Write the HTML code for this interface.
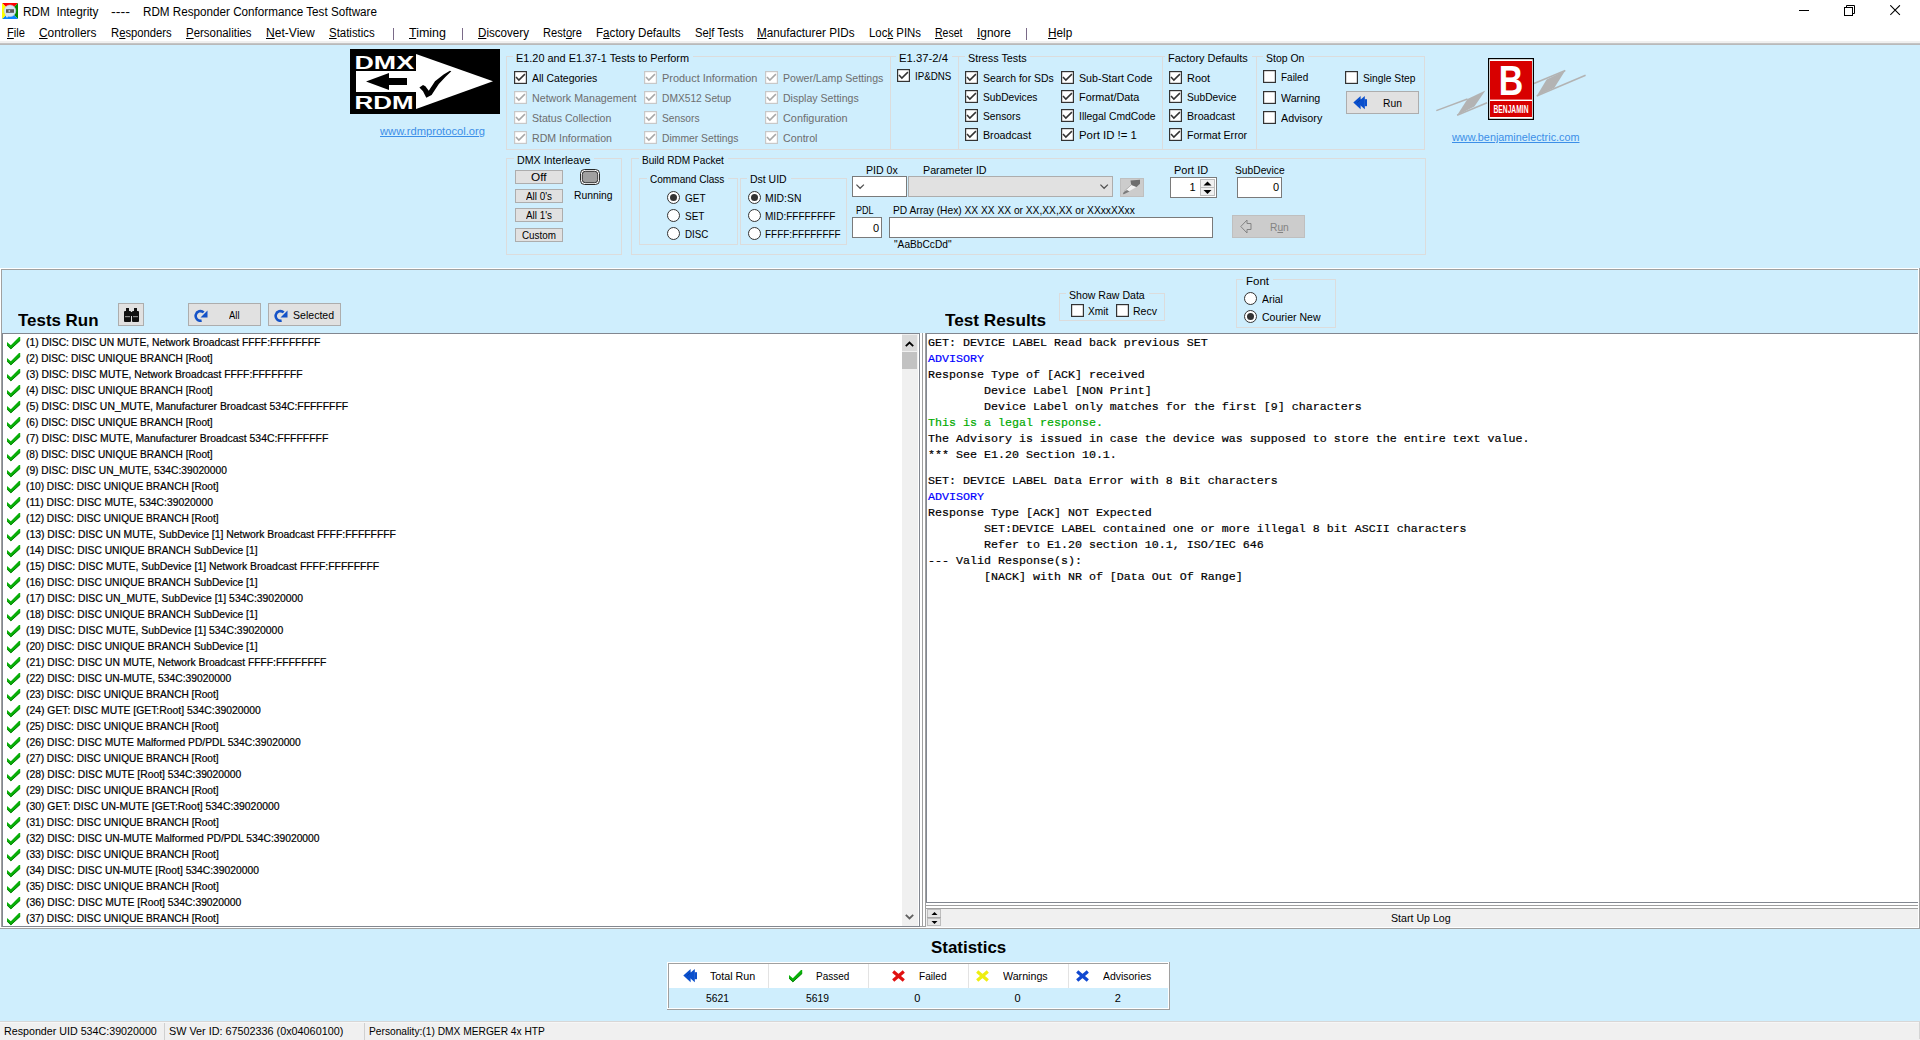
<!DOCTYPE html>
<html><head><meta charset="utf-8"><title>RDM Integrity</title>
<style>
html,body{margin:0;padding:0;}
body{width:1920px;height:1040px;overflow:hidden;position:relative;background:#CFEEFD;font-family:"Liberation Sans",sans-serif;}
.a{position:absolute;}
.t{position:absolute;white-space:pre;line-height:1;transform-origin:0 0;}
u{text-decoration:underline;text-underline-offset:1px;}

</style></head><body>
<div class="a" style="left:0px;top:0px;width:1920px;height:41px;background:#FFFFFF;"></div><div class="a" style="left:0px;top:41px;width:1920px;height:2px;background:#F0F0F0;"></div><div class="a" style="left:0px;top:43px;width:1920px;height:1px;background:#C4C4C4;"></div><div class="a" style="left:0px;top:44px;width:1920px;height:1px;background:#B9B9B9;"></div><svg class="a" style="left:2px;top:3px;" width="16" height="16" viewBox="0 0 16 16"><polygon points="0,0 16,0 8,8" fill="#FF0000"/><polygon points="16,0 16,16 8,8" fill="#008A00"/><polygon points="16,16 0,16 8,8" fill="#0A84FF"/><polygon points="0,16 0,0 8,8" fill="#FFFF00"/><polygon points="3,11 6.5,12 5,15" fill="#FFFFFF"/><circle cx="8" cy="7.8" r="5.8" fill="#D6E6F6" stroke="#C8CCD8" stroke-width="0.6"/><rect x="4" y="6.2" width="8" height="3.6" fill="#5A5A5A"/><rect x="6.5" y="7" width="1.6" height="2" fill="#B8B8B8"/></svg><span class="t" style="left:23px;top:6px;font-size:12px;color:#000;transform:scaleX(0.9845);">RDM  Integrity</span><span class="t" style="left:111px;top:6px;font-size:12px;color:#000;transform:scaleX(1.1887);">----</span><span class="t" style="left:143px;top:6px;font-size:12px;color:#000;transform:scaleX(0.9727);">RDM Responder Conformance Test Software</span><div class="a" style="left:1799px;top:10px;width:10px;height:1px;background:#000;"></div><svg class="a" style="left:1844px;top:5px;" width="12" height="12" viewBox="0 0 12 12"><rect x="0.5" y="2.5" width="8" height="8" fill="none" stroke="#000"/><path d="M2.5 2.5 V0.5 H10.5 V8.5 H8.5" fill="none" stroke="#000"/></svg><svg class="a" style="left:1890px;top:5px;" width="11" height="11" viewBox="0 0 11 11"><path d="M0.3 0.3 L9.9 9.9 M9.9 0.3 L0.3 9.9" stroke="#000" stroke-width="1.1"/></svg><span class="t" style="left:7px;top:27px;font-size:12px;color:#000;transform:scaleX(0.9298);"><u>F</u>ile</span><span class="t" style="left:39.25px;top:27px;font-size:12px;color:#000;transform:scaleX(0.9908);"><u>C</u>ontrollers</span><span class="t" style="left:111.25px;top:27px;font-size:12px;color:#000;transform:scaleX(0.9385);">R<u>e</u>sponders</span><span class="t" style="left:186.25px;top:27px;font-size:12px;color:#000;transform:scaleX(0.9532);"><u>P</u>ersonalities</span><span class="t" style="left:266.25px;top:27px;font-size:12px;color:#000;transform:scaleX(1.0058);"><u>N</u>et-View</span><span class="t" style="left:329.25px;top:27px;font-size:12px;color:#000;transform:scaleX(0.9525);"><u>S</u>tatistics</span><div class="a" style="left:393px;top:28px;width:1px;height:12px;background:#7A6A88;"></div><span class="t" style="left:409.25px;top:27px;font-size:12px;color:#000;transform:scaleX(1.0400);"><u>T</u>iming</span><div class="a" style="left:462px;top:28px;width:1px;height:12px;background:#7A6A88;"></div><span class="t" style="left:478px;top:27px;font-size:12px;color:#000;transform:scaleX(0.9680);"><u>D</u>iscovery</span><span class="t" style="left:543px;top:27px;font-size:12px;color:#000;transform:scaleX(0.9275);">Rest<u>o</u>re</span><span class="t" style="left:596.2px;top:27px;font-size:12px;color:#000;transform:scaleX(0.9681);">F<u>a</u>ctory Defaults</span><span class="t" style="left:694.7px;top:27px;font-size:12px;color:#000;transform:scaleX(0.9358);">Se<u>l</u>f Tests</span><span class="t" style="left:757px;top:27px;font-size:12px;color:#000;transform:scaleX(0.9745);"><u>M</u>anufacturer PIDs</span><span class="t" style="left:869px;top:27px;font-size:12px;color:#000;transform:scaleX(0.9506);">Loc<u>k</u> PINs</span><span class="t" style="left:935.3px;top:27px;font-size:12px;color:#000;transform:scaleX(0.8737);"><u>R</u>eset</span><span class="t" style="left:977.3px;top:27px;font-size:12px;color:#000;transform:scaleX(0.9957);"><u>I</u>gnore</span><div class="a" style="left:1026px;top:28px;width:1px;height:12px;background:#7A6A88;"></div><span class="t" style="left:1048.3px;top:27px;font-size:12px;color:#000;transform:scaleX(0.9803);"><u>H</u>elp</span><svg class="a" style="left:350px;top:49px;" width="150" height="65" viewBox="0 0 150 65"><rect x="0" y="0" width="150" height="65" fill="#000"/><text x="4.5" y="19.5" font-family="Liberation Sans" font-weight="700" font-size="19" fill="#fff" textLength="59.5" lengthAdjust="spacingAndGlyphs">DMX</text><rect x="6" y="22" width="60" height="21" fill="#fff"/><polygon points="16,32.5 39,24 39,29 57,29 57,36 39,36 39,41" fill="#000"/><text x="4.5" y="59.8" font-family="Liberation Sans" font-weight="700" font-size="19" fill="#fff" textLength="59" lengthAdjust="spacingAndGlyphs">RDM</text><polygon points="66,5 143,32.3 66,60" fill="#fff"/><polygon points="69.4,38.4 73,36 75.4,37.2 78.75,41.8 85,32.2 93.6,25.4 99.9,21.8 101.3,22.3 95.6,27.8 88.8,35 81.6,46.1 76.3,48.7 73,42.25" fill="#000"/></svg><span class="t" style="left:380px;top:126px;font-size:11px;color:#3C8FE8;transform:scaleX(1.0162);text-decoration:underline;">www.rdmprotocol.org</span><div class="a" style="left:506px;top:56px;width:7px;height:1px;background:#DCDCDC;"></div><div class="a" style="left:693px;top:56px;width:197px;height:1px;background:#DCDCDC;"></div><div class="a" style="left:506px;top:56px;width:1px;height:93px;background:#DCDCDC;"></div><div class="a" style="left:890px;top:56px;width:1px;height:94px;background:#DCDCDC;"></div><div class="a" style="left:506px;top:149px;width:385px;height:1px;background:#DCDCDC;"></div><span class="t" style="left:516px;top:53px;font-size:11px;color:#000;transform:scaleX(0.9903);">E1.20 and E1.37-1 Tests to Perform</span><svg class="a" style="left:514px;top:71px;" width="13" height="13" viewBox="0 0 13 13"><rect x="0.6" y="0.6" width="11.8" height="11.8" fill="#fff" stroke="#333333" stroke-width="1.2"/><path d="M2 6 L4.85 9.1 L10.9 3.1" fill="none" stroke="#333333" stroke-width="1.5"/></svg><span class="t" style="left:532px;top:73px;font-size:11px;color:#000;transform:scaleX(0.9520);">All Categories</span><svg class="a" style="left:514px;top:91px;" width="13" height="13" viewBox="0 0 13 13"><rect x="0.6" y="0.6" width="11.8" height="11.8" fill="#fff" stroke="#C8C8C8" stroke-width="1.2"/><path d="M2 6 L4.85 9.1 L10.9 3.1" fill="none" stroke="#A8A8A8" stroke-width="1.5"/></svg><span class="t" style="left:532px;top:93px;font-size:11px;color:#6D6D6D;transform:scaleX(0.9711);">Network Management</span><svg class="a" style="left:514px;top:111px;" width="13" height="13" viewBox="0 0 13 13"><rect x="0.6" y="0.6" width="11.8" height="11.8" fill="#fff" stroke="#C8C8C8" stroke-width="1.2"/><path d="M2 6 L4.85 9.1 L10.9 3.1" fill="none" stroke="#A8A8A8" stroke-width="1.5"/></svg><span class="t" style="left:532px;top:113px;font-size:11px;color:#6D6D6D;transform:scaleX(0.9607);">Status Collection</span><svg class="a" style="left:514px;top:131px;" width="13" height="13" viewBox="0 0 13 13"><rect x="0.6" y="0.6" width="11.8" height="11.8" fill="#fff" stroke="#C8C8C8" stroke-width="1.2"/><path d="M2 6 L4.85 9.1 L10.9 3.1" fill="none" stroke="#A8A8A8" stroke-width="1.5"/></svg><span class="t" style="left:532px;top:133px;font-size:11px;color:#6D6D6D;transform:scaleX(0.9622);">RDM Information</span><svg class="a" style="left:644px;top:71px;" width="13" height="13" viewBox="0 0 13 13"><rect x="0.6" y="0.6" width="11.8" height="11.8" fill="#fff" stroke="#C8C8C8" stroke-width="1.2"/><path d="M2 6 L4.85 9.1 L10.9 3.1" fill="none" stroke="#A8A8A8" stroke-width="1.5"/></svg><span class="t" style="left:661.7px;top:73px;font-size:11px;color:#6D6D6D;transform:scaleX(0.9938);">Product Information</span><svg class="a" style="left:644px;top:91px;" width="13" height="13" viewBox="0 0 13 13"><rect x="0.6" y="0.6" width="11.8" height="11.8" fill="#fff" stroke="#C8C8C8" stroke-width="1.2"/><path d="M2 6 L4.85 9.1 L10.9 3.1" fill="none" stroke="#A8A8A8" stroke-width="1.5"/></svg><span class="t" style="left:661.7px;top:93px;font-size:11px;color:#6D6D6D;transform:scaleX(0.9288);">DMX512 Setup</span><svg class="a" style="left:644px;top:111px;" width="13" height="13" viewBox="0 0 13 13"><rect x="0.6" y="0.6" width="11.8" height="11.8" fill="#fff" stroke="#C8C8C8" stroke-width="1.2"/><path d="M2 6 L4.85 9.1 L10.9 3.1" fill="none" stroke="#A8A8A8" stroke-width="1.5"/></svg><span class="t" style="left:661.7px;top:113px;font-size:11px;color:#6D6D6D;transform:scaleX(0.9292);">Sensors</span><svg class="a" style="left:644px;top:131px;" width="13" height="13" viewBox="0 0 13 13"><rect x="0.6" y="0.6" width="11.8" height="11.8" fill="#fff" stroke="#C8C8C8" stroke-width="1.2"/><path d="M2 6 L4.85 9.1 L10.9 3.1" fill="none" stroke="#A8A8A8" stroke-width="1.5"/></svg><span class="t" style="left:661.7px;top:133px;font-size:11px;color:#6D6D6D;transform:scaleX(0.9410);">Dimmer Settings</span><svg class="a" style="left:765px;top:71px;" width="13" height="13" viewBox="0 0 13 13"><rect x="0.6" y="0.6" width="11.8" height="11.8" fill="#fff" stroke="#C8C8C8" stroke-width="1.2"/><path d="M2 6 L4.85 9.1 L10.9 3.1" fill="none" stroke="#A8A8A8" stroke-width="1.5"/></svg><span class="t" style="left:782.6px;top:73px;font-size:11px;color:#6D6D6D;transform:scaleX(0.9602);">Power/Lamp Settings</span><svg class="a" style="left:765px;top:91px;" width="13" height="13" viewBox="0 0 13 13"><rect x="0.6" y="0.6" width="11.8" height="11.8" fill="#fff" stroke="#C8C8C8" stroke-width="1.2"/><path d="M2 6 L4.85 9.1 L10.9 3.1" fill="none" stroke="#A8A8A8" stroke-width="1.5"/></svg><span class="t" style="left:782.6px;top:93px;font-size:11px;color:#6D6D6D;transform:scaleX(0.9597);">Display Settings</span><svg class="a" style="left:765px;top:111px;" width="13" height="13" viewBox="0 0 13 13"><rect x="0.6" y="0.6" width="11.8" height="11.8" fill="#fff" stroke="#C8C8C8" stroke-width="1.2"/><path d="M2 6 L4.85 9.1 L10.9 3.1" fill="none" stroke="#A8A8A8" stroke-width="1.5"/></svg><span class="t" style="left:782.6px;top:113px;font-size:11px;color:#6D6D6D;transform:scaleX(0.9872);">Configuration</span><svg class="a" style="left:765px;top:131px;" width="13" height="13" viewBox="0 0 13 13"><rect x="0.6" y="0.6" width="11.8" height="11.8" fill="#fff" stroke="#C8C8C8" stroke-width="1.2"/><path d="M2 6 L4.85 9.1 L10.9 3.1" fill="none" stroke="#A8A8A8" stroke-width="1.5"/></svg><span class="t" style="left:782.6px;top:133px;font-size:11px;color:#6D6D6D;transform:scaleX(0.9727);">Control</span><div class="a" style="left:890px;top:56px;width:6px;height:1px;background:#DCDCDC;"></div><div class="a" style="left:952px;top:56px;width:6px;height:1px;background:#DCDCDC;"></div><div class="a" style="left:890px;top:149px;width:68px;height:1px;background:#DCDCDC;"></div><span class="t" style="left:899px;top:53px;font-size:11px;color:#000;transform:scaleX(1.0272);">E1.37-2/4</span><svg class="a" style="left:897px;top:69px;" width="13" height="13" viewBox="0 0 13 13"><rect x="0.6" y="0.6" width="11.8" height="11.8" fill="#fff" stroke="#333333" stroke-width="1.2"/><path d="M2 6 L4.85 9.1 L10.9 3.1" fill="none" stroke="#333333" stroke-width="1.5"/></svg><span class="t" style="left:914.7px;top:71px;font-size:11px;color:#000;transform:scaleX(0.8860);">IP&amp;DNS</span><div class="a" style="left:958px;top:56px;width:6.600000000000023px;height:1px;background:#DCDCDC;"></div><div class="a" style="left:1030.2px;top:56px;width:131.79999999999995px;height:1px;background:#DCDCDC;"></div><div class="a" style="left:958px;top:56px;width:1px;height:93px;background:#DCDCDC;"></div><div class="a" style="left:958px;top:149px;width:205px;height:1px;background:#DCDCDC;"></div><span class="t" style="left:967.6px;top:53px;font-size:11px;color:#000;transform:scaleX(0.9813);">Stress Tests</span><svg class="a" style="left:965px;top:71px;" width="13" height="13" viewBox="0 0 13 13"><rect x="0.6" y="0.6" width="11.8" height="11.8" fill="#fff" stroke="#333333" stroke-width="1.2"/><path d="M2 6 L4.85 9.1 L10.9 3.1" fill="none" stroke="#333333" stroke-width="1.5"/></svg><span class="t" style="left:982.7px;top:73px;font-size:11px;color:#000;transform:scaleX(0.9478);">Search for SDs</span><svg class="a" style="left:1061px;top:71px;" width="13" height="13" viewBox="0 0 13 13"><rect x="0.6" y="0.6" width="11.8" height="11.8" fill="#fff" stroke="#333333" stroke-width="1.2"/><path d="M2 6 L4.85 9.1 L10.9 3.1" fill="none" stroke="#333333" stroke-width="1.5"/></svg><span class="t" style="left:1078.6px;top:73px;font-size:11px;color:#000;transform:scaleX(0.9667);">Sub-Start Code</span><svg class="a" style="left:965px;top:90px;" width="13" height="13" viewBox="0 0 13 13"><rect x="0.6" y="0.6" width="11.8" height="11.8" fill="#fff" stroke="#333333" stroke-width="1.2"/><path d="M2 6 L4.85 9.1 L10.9 3.1" fill="none" stroke="#333333" stroke-width="1.5"/></svg><span class="t" style="left:982.7px;top:92px;font-size:11px;color:#000;transform:scaleX(0.9267);">SubDevices</span><svg class="a" style="left:1061px;top:90px;" width="13" height="13" viewBox="0 0 13 13"><rect x="0.6" y="0.6" width="11.8" height="11.8" fill="#fff" stroke="#333333" stroke-width="1.2"/><path d="M2 6 L4.85 9.1 L10.9 3.1" fill="none" stroke="#333333" stroke-width="1.5"/></svg><span class="t" style="left:1078.6px;top:92px;font-size:11px;color:#000;transform:scaleX(0.9879);">Format/Data</span><svg class="a" style="left:965px;top:109px;" width="13" height="13" viewBox="0 0 13 13"><rect x="0.6" y="0.6" width="11.8" height="11.8" fill="#fff" stroke="#333333" stroke-width="1.2"/><path d="M2 6 L4.85 9.1 L10.9 3.1" fill="none" stroke="#333333" stroke-width="1.5"/></svg><span class="t" style="left:982.7px;top:111px;font-size:11px;color:#000;transform:scaleX(0.9292);">Sensors</span><svg class="a" style="left:1061px;top:109px;" width="13" height="13" viewBox="0 0 13 13"><rect x="0.6" y="0.6" width="11.8" height="11.8" fill="#fff" stroke="#333333" stroke-width="1.2"/><path d="M2 6 L4.85 9.1 L10.9 3.1" fill="none" stroke="#333333" stroke-width="1.5"/></svg><span class="t" style="left:1078.6px;top:111px;font-size:11px;color:#000;transform:scaleX(0.9419);">Illegal CmdCode</span><svg class="a" style="left:965px;top:128px;" width="13" height="13" viewBox="0 0 13 13"><rect x="0.6" y="0.6" width="11.8" height="11.8" fill="#fff" stroke="#333333" stroke-width="1.2"/><path d="M2 6 L4.85 9.1 L10.9 3.1" fill="none" stroke="#333333" stroke-width="1.5"/></svg><span class="t" style="left:982.7px;top:130px;font-size:11px;color:#000;transform:scaleX(0.9711);">Broadcast</span><svg class="a" style="left:1061px;top:128px;" width="13" height="13" viewBox="0 0 13 13"><rect x="0.6" y="0.6" width="11.8" height="11.8" fill="#fff" stroke="#333333" stroke-width="1.2"/><path d="M2 6 L4.85 9.1 L10.9 3.1" fill="none" stroke="#333333" stroke-width="1.5"/></svg><span class="t" style="left:1078.6px;top:130px;font-size:11px;color:#000;transform:scaleX(1.0348);">Port ID != 1</span><div class="a" style="left:1162px;top:56px;width:3.400000000000091px;height:1px;background:#DCDCDC;"></div><div class="a" style="left:1252.2px;top:56px;width:3.7999999999999545px;height:1px;background:#DCDCDC;"></div><div class="a" style="left:1162px;top:56px;width:1px;height:93px;background:#DCDCDC;"></div><div class="a" style="left:1162px;top:149px;width:95px;height:1px;background:#DCDCDC;"></div><span class="t" style="left:1168.4px;top:53px;font-size:11px;color:#000;transform:scaleX(0.9963);">Factory Defaults</span><svg class="a" style="left:1169px;top:71px;" width="13" height="13" viewBox="0 0 13 13"><rect x="0.6" y="0.6" width="11.8" height="11.8" fill="#fff" stroke="#333333" stroke-width="1.2"/><path d="M2 6 L4.85 9.1 L10.9 3.1" fill="none" stroke="#333333" stroke-width="1.5"/></svg><span class="t" style="left:1186.6px;top:73px;font-size:11px;color:#000;transform:scaleX(0.9935);">Root</span><svg class="a" style="left:1169px;top:90px;" width="13" height="13" viewBox="0 0 13 13"><rect x="0.6" y="0.6" width="11.8" height="11.8" fill="#fff" stroke="#333333" stroke-width="1.2"/><path d="M2 6 L4.85 9.1 L10.9 3.1" fill="none" stroke="#333333" stroke-width="1.5"/></svg><span class="t" style="left:1186.6px;top:92px;font-size:11px;color:#000;transform:scaleX(0.9304);">SubDevice</span><svg class="a" style="left:1169px;top:109px;" width="13" height="13" viewBox="0 0 13 13"><rect x="0.6" y="0.6" width="11.8" height="11.8" fill="#fff" stroke="#333333" stroke-width="1.2"/><path d="M2 6 L4.85 9.1 L10.9 3.1" fill="none" stroke="#333333" stroke-width="1.5"/></svg><span class="t" style="left:1186.6px;top:111px;font-size:11px;color:#000;transform:scaleX(0.9691);">Broadcast</span><svg class="a" style="left:1169px;top:128px;" width="13" height="13" viewBox="0 0 13 13"><rect x="0.6" y="0.6" width="11.8" height="11.8" fill="#fff" stroke="#333333" stroke-width="1.2"/><path d="M2 6 L4.85 9.1 L10.9 3.1" fill="none" stroke="#333333" stroke-width="1.5"/></svg><span class="t" style="left:1186.6px;top:130px;font-size:11px;color:#000;transform:scaleX(0.9640);">Format Error</span><div class="a" style="left:1256px;top:56px;width:6.599999999999909px;height:1px;background:#DCDCDC;"></div><div class="a" style="left:1308.0px;top:56px;width:116.0px;height:1px;background:#DCDCDC;"></div><div class="a" style="left:1256px;top:56px;width:1px;height:93px;background:#DCDCDC;"></div><div class="a" style="left:1424px;top:56px;width:1px;height:94px;background:#DCDCDC;"></div><div class="a" style="left:1256px;top:149px;width:169px;height:1px;background:#DCDCDC;"></div><span class="t" style="left:1265.6px;top:53px;font-size:11px;color:#000;transform:scaleX(0.9515);">Stop On</span><svg class="a" style="left:1263px;top:70px;" width="13" height="13" viewBox="0 0 13 13"><rect x="0.6" y="0.6" width="11.8" height="11.8" fill="#fff" stroke="#333333" stroke-width="1.2"/></svg><span class="t" style="left:1280.7px;top:72px;font-size:11px;color:#000;transform:scaleX(0.9076);">Failed</span><svg class="a" style="left:1263px;top:91px;" width="13" height="13" viewBox="0 0 13 13"><rect x="0.6" y="0.6" width="11.8" height="11.8" fill="#fff" stroke="#333333" stroke-width="1.2"/></svg><span class="t" style="left:1280.7px;top:93px;font-size:11px;color:#000;transform:scaleX(0.9689);">Warning</span><svg class="a" style="left:1263px;top:111px;" width="13" height="13" viewBox="0 0 13 13"><rect x="0.6" y="0.6" width="11.8" height="11.8" fill="#fff" stroke="#333333" stroke-width="1.2"/></svg><span class="t" style="left:1280.7px;top:113px;font-size:11px;color:#000;transform:scaleX(0.9790);">Advisory</span><svg class="a" style="left:1345px;top:71px;" width="13" height="13" viewBox="0 0 13 13"><rect x="0.6" y="0.6" width="11.8" height="11.8" fill="#fff" stroke="#333333" stroke-width="1.2"/></svg><span class="t" style="left:1362.7px;top:73px;font-size:11px;color:#000;transform:scaleX(0.9313);">Single Step</span><div class="a" style="left:1346px;top:91px;width:73px;height:23px;background:#E1E1E1;border:1px solid #ADADAD;box-sizing:border-box;"></div><svg class="a" style="left:1353px;top:96px;" width="15" height="14" viewBox="0 0 15 14"><polygon points="0.3,6.6 7.6,0 7.6,13.2" fill="#0A4FCC"/><polygon points="4.2,6.6 11.8,0 11.8,13.2" fill="#0A4FCC"/><rect x="11.5" y="3.2" width="2.5" height="7" fill="#0A4FCC"/><path d="M4.2 6.6 L7.6 3.6" stroke="#0638A0" stroke-width="0.8"/></svg><span class="t" style="left:1383.4px;top:98px;font-size:11px;color:#000;transform:scaleX(0.9362);">Run</span><svg class="a" style="left:1430px;top:56px;" width="160" height="66" viewBox="0 0 160 66"><path d="M6.3 54.6 L37.5 43" stroke="#B3B3B3" stroke-width="1.5"/><polygon points="37.5,43 55.4,34.4 44.4,50.5 27.1,59.2" fill="#B3B3B3"/><path d="M27.1 59.2 L57.1 46.8" stroke="#B3B3B3" stroke-width="1.5"/><path d="M104 27.5 L135.3 14.5" stroke="#B3B3B3" stroke-width="1.5"/><polygon points="116.6,23.4 135.3,14.5 124.4,31.7 106.7,40" fill="#B3B3B3"/><path d="M106.7 40 L155.6 19.2" stroke="#B3B3B3" stroke-width="1.5"/><rect x="58.6" y="2.6" width="44.8" height="60.8" fill="#fff" stroke="#000" stroke-width="1.2"/><rect x="60" y="5" width="42" height="38.6" fill="#D80000"/><rect x="60" y="45" width="42" height="16" fill="#D80000"/><text x="81" y="39" font-family="Liberation Sans" font-weight="700" font-size="42" fill="#fff" text-anchor="middle" textLength="24.5" lengthAdjust="spacingAndGlyphs">B</text><text x="81" y="56.7" font-family="Liberation Sans" font-weight="700" font-size="10" fill="#fff" text-anchor="middle" textLength="35" lengthAdjust="spacingAndGlyphs">BENJAMIN</text></svg><span class="t" style="left:1452px;top:132px;font-size:11px;color:#3C8FE8;transform:scaleX(0.9837);text-decoration:underline;">www.benjaminelectric.com</span><div class="a" style="left:506px;top:158px;width:7.5px;height:1px;background:#DCDCDC;"></div><div class="a" style="left:594.0px;top:158px;width:27.0px;height:1px;background:#DCDCDC;"></div><div class="a" style="left:506px;top:158px;width:1px;height:96px;background:#DCDCDC;"></div><div class="a" style="left:621px;top:158px;width:1px;height:97px;background:#DCDCDC;"></div><div class="a" style="left:506px;top:254px;width:116px;height:1px;background:#DCDCDC;"></div><span class="t" style="left:516.5px;top:155px;font-size:11px;color:#000;transform:scaleX(0.9695);">DMX Interleave</span><div class="a" style="left:515px;top:170px;width:48px;height:14px;background:#E1E1E1;border:1px solid #ADADAD;box-sizing:border-box;"></div><span class="t" style="left:531.25px;top:172px;font-size:11px;color:#000;transform:scaleX(1.0701);">Off</span><div class="a" style="left:515px;top:189px;width:48px;height:14px;background:#E1E1E1;border:1px solid #ADADAD;box-sizing:border-box;"></div><span class="t" style="left:526.00px;top:191px;font-size:11px;color:#000;transform:scaleX(0.8966);">All 0&#x27;s</span><div class="a" style="left:515px;top:208px;width:48px;height:14px;background:#E1E1E1;border:1px solid #ADADAD;box-sizing:border-box;"></div><span class="t" style="left:526.00px;top:210px;font-size:11px;color:#000;transform:scaleX(0.8966);">All 1&#x27;s</span><div class="a" style="left:515px;top:228px;width:48px;height:14px;background:#E1E1E1;border:1px solid #ADADAD;box-sizing:border-box;"></div><span class="t" style="left:522.00px;top:230px;font-size:11px;color:#000;transform:scaleX(0.8969);">Custom</span><svg class="a" style="left:580px;top:169px;" width="20" height="16" viewBox="0 0 20 16"><rect x="0.5" y="0.5" width="19" height="15" rx="4" fill="#fff" stroke="#111" stroke-width="0.9"/><rect x="2.3" y="2.3" width="15.4" height="11.4" rx="3" fill="#A0A0A0" stroke="#222" stroke-width="0.9"/></svg><span class="t" style="left:573.5px;top:190px;font-size:11px;color:#000;transform:scaleX(0.9418);">Running</span><div class="a" style="left:631px;top:158px;width:7.600000000000023px;height:1px;background:#DCDCDC;"></div><div class="a" style="left:727.5px;top:158px;width:697.5px;height:1px;background:#DCDCDC;"></div><div class="a" style="left:631px;top:158px;width:1px;height:96px;background:#DCDCDC;"></div><div class="a" style="left:1425px;top:158px;width:1px;height:97px;background:#DCDCDC;"></div><div class="a" style="left:631px;top:254px;width:795px;height:1px;background:#DCDCDC;"></div><span class="t" style="left:641.6px;top:155px;font-size:11px;color:#000;transform:scaleX(0.9175);">Build RDM Packet</span><div class="a" style="left:639px;top:178px;width:7.600000000000023px;height:1px;background:#DCDCDC;"></div><div class="a" style="left:728.0px;top:178px;width:9.0px;height:1px;background:#DCDCDC;"></div><div class="a" style="left:639px;top:178px;width:1px;height:66px;background:#DCDCDC;"></div><div class="a" style="left:737px;top:178px;width:1px;height:67px;background:#DCDCDC;"></div><div class="a" style="left:639px;top:244px;width:99px;height:1px;background:#DCDCDC;"></div><span class="t" style="left:649.6px;top:174px;font-size:11px;color:#000;transform:scaleX(0.9150);">Command Class</span><div class="a" style="left:740px;top:178px;width:7.2999999999999545px;height:1px;background:#DCDCDC;"></div><div class="a" style="left:790.9px;top:178px;width:55.10000000000002px;height:1px;background:#DCDCDC;"></div><div class="a" style="left:740px;top:178px;width:1px;height:66px;background:#DCDCDC;"></div><div class="a" style="left:846px;top:178px;width:1px;height:67px;background:#DCDCDC;"></div><div class="a" style="left:740px;top:244px;width:107px;height:1px;background:#DCDCDC;"></div><span class="t" style="left:750.3px;top:174px;font-size:11px;color:#000;transform:scaleX(0.9506);">Dst UID</span><svg class="a" style="left:667.0px;top:191.0px;" width="13" height="13" viewBox="0 0 13 13"><circle cx="6.5" cy="6.5" r="6" fill="#fff" stroke="#333" stroke-width="1"/><circle cx="6.5" cy="6.5" r="3.5" fill="#333"/></svg><span class="t" style="left:684.7px;top:193px;font-size:11px;color:#000;transform:scaleX(0.9061);">GET</span><svg class="a" style="left:667.0px;top:209.0px;" width="13" height="13" viewBox="0 0 13 13"><circle cx="6.5" cy="6.5" r="6" fill="#fff" stroke="#333" stroke-width="1"/></svg><span class="t" style="left:684.7px;top:211px;font-size:11px;color:#000;transform:scaleX(0.9109);">SET</span><svg class="a" style="left:667.0px;top:227.0px;" width="13" height="13" viewBox="0 0 13 13"><circle cx="6.5" cy="6.5" r="6" fill="#fff" stroke="#333" stroke-width="1"/></svg><span class="t" style="left:684.7px;top:229px;font-size:11px;color:#000;transform:scaleX(0.8904);">DISC</span><svg class="a" style="left:748.0px;top:191.0px;" width="13" height="13" viewBox="0 0 13 13"><circle cx="6.5" cy="6.5" r="6" fill="#fff" stroke="#333" stroke-width="1"/><circle cx="6.5" cy="6.5" r="3.5" fill="#333"/></svg><span class="t" style="left:765.3px;top:193px;font-size:11px;color:#000;transform:scaleX(0.9455);">MID:SN</span><svg class="a" style="left:748.0px;top:209.0px;" width="13" height="13" viewBox="0 0 13 13"><circle cx="6.5" cy="6.5" r="6" fill="#fff" stroke="#333" stroke-width="1"/></svg><span class="t" style="left:765.3px;top:211px;font-size:11px;color:#000;transform:scaleX(0.9132);">MID:FFFFFFFF</span><svg class="a" style="left:748.0px;top:227.0px;" width="13" height="13" viewBox="0 0 13 13"><circle cx="6.5" cy="6.5" r="6" fill="#fff" stroke="#333" stroke-width="1"/></svg><span class="t" style="left:765.3px;top:229px;font-size:11px;color:#000;transform:scaleX(0.9034);">FFFF:FFFFFFFF</span><span class="t" style="left:865.7px;top:165px;font-size:11px;color:#000;transform:scaleX(0.9632);">PID 0x</span><span class="t" style="left:922.6px;top:165px;font-size:11px;color:#000;transform:scaleX(0.9722);">Parameter ID</span><div class="a" style="left:852px;top:176px;width:55px;height:21px;background:#fff;border:1px solid #7A7A7A;box-sizing:border-box;"></div><svg class="a" style="left:856px;top:184px;" width="9" height="6" viewBox="0 0 9 6"><path d="M0.4 0.6 L4.1 4.3 L7.9 0.6" fill="none" stroke="#505050" stroke-width="1.25"/></svg><div class="a" style="left:908px;top:176px;width:205px;height:21px;background:#E1E1E1;border:1px solid #ADADAD;box-sizing:border-box;"></div><svg class="a" style="left:1099.5px;top:184px;" width="9" height="6" viewBox="0 0 9 6"><path d="M0.4 0.6 L4.1 4.3 L7.9 0.6" fill="none" stroke="#505050" stroke-width="1.25"/></svg><div class="a" style="left:1120px;top:178px;width:24px;height:19px;background:#CCCCCC;border:1px solid #BFBFBF;box-sizing:border-box;"></div><svg class="a" style="left:1120px;top:178px;" width="24" height="19" viewBox="0 0 24 19"><polygon points="11.5,6 16.5,9 5,15.5 3,16 4,13.5" fill="#F2F2F2"/><polygon points="7,12 9.5,13.6 4.5,16 2.8,16.3 3.6,14" fill="#7C7C7C"/><polygon points="10.5,2.5 20,1.8 20,5.8 16.5,9 11.2,7" fill="#6E6E6E"/><path d="M11.5 6.5 L4 13.5" stroke="#9A9A9A" stroke-width="0.8"/></svg><span class="t" style="left:1173.5px;top:165px;font-size:11px;color:#000;transform:scaleX(0.9961);">Port ID</span><span class="t" style="left:1234.5px;top:165px;font-size:11px;color:#000;transform:scaleX(0.9323);">SubDevice</span><div class="a" style="left:1170px;top:177px;width:47px;height:21px;background:#fff;border:1px solid #7A7A7A;box-sizing:border-box;"></div><div class="a" style="left:1200px;top:179px;width:15px;height:17px;background:#F0F0F0;border:1px solid #BDBDBD;box-sizing:border-box;"></div><div class="a" style="left:1201px;top:187px;width:13px;height:1px;background:#BDBDBD;"></div><svg class="a" style="left:1203px;top:181px;" width="9" height="14" viewBox="0 0 9 14"><polygon points="4.5,0.5 8.5,4.5 0.5,4.5" fill="#000"/><polygon points="0.5,9 8.5,9 4.5,13" fill="#000"/></svg><span class="t" style="left:1189.38px;top:182px;font-size:11px;color:#000;">1</span><div class="a" style="left:1237px;top:177px;width:45px;height:21px;background:#fff;border:1px solid #7A7A7A;box-sizing:border-box;"></div><span class="t" style="left:1272.88px;top:182px;font-size:11px;color:#000;">0</span><span class="t" style="left:855.6px;top:205px;font-size:11px;color:#000;transform:scaleX(0.8222);">PDL</span><span class="t" style="left:892.5px;top:205px;font-size:11px;color:#000;transform:scaleX(0.9285);">PD Array (Hex) XX XX XX or XX,XX,XX or XXxxXXxx</span><div class="a" style="left:852px;top:217px;width:30px;height:21px;background:#fff;border:1px solid #7A7A7A;box-sizing:border-box;"></div><span class="t" style="left:872.88px;top:223px;font-size:11px;color:#000;">0</span><div class="a" style="left:889px;top:217px;width:324px;height:21px;background:#fff;border:1px solid #7A7A7A;box-sizing:border-box;"></div><span class="t" style="left:893.5px;top:239px;font-size:11px;color:#000;transform:scaleX(0.9239);">&quot;AaBbCcDd&quot;</span><div class="a" style="left:1232px;top:215px;width:73px;height:23px;background:#CCCCCC;border:1px solid #BFBFBF;box-sizing:border-box;"></div><svg class="a" style="left:1240px;top:219px;" width="12" height="15" viewBox="0 0 12 15"><polygon points="0.8,7.5 7,1 7,4.5 11,4.5 11,10.5 7,10.5 7,14" fill="none" stroke="#838383" stroke-width="1"/></svg><span class="t" style="left:1269.5px;top:222px;font-size:11px;color:#838383;transform:scaleX(0.9305);">R<u>u</u>n</span><div class="a" style="left:0px;top:268px;width:1920px;height:1px;background:#FFFFFF;"></div><div class="a" style="left:1px;top:269px;width:1918px;height:1px;background:#A0A0A0;"></div><div class="a" style="left:0px;top:268px;width:1px;height:661px;background:#FFFFFF;"></div><div class="a" style="left:1px;top:269px;width:1px;height:659px;background:#A0A0A0;"></div><div class="a" style="left:1918px;top:269px;width:1px;height:659px;background:#FFFFFF;"></div><div class="a" style="left:1919px;top:268px;width:1px;height:661px;background:#A0A0A0;"></div><span class="t" style="left:18px;top:312px;font-size:17px;color:#000;font-weight:700;transform:scaleX(0.9948);">Tests Run</span><div class="a" style="left:118px;top:303px;width:26px;height:23px;background:#E1E1E1;border:1px solid #ADADAD;box-sizing:border-box;"></div><svg class="a" style="left:123px;top:307px;" width="17" height="15" viewBox="0 0 17 15"><rect x="3" y="1" width="3" height="4" fill="#111"/><rect x="11" y="1" width="3" height="4" fill="#111"/><rect x="1" y="4" width="7" height="11" rx="1" fill="#111"/><rect x="9" y="4" width="7" height="11" rx="1" fill="#111"/><rect x="7" y="5" width="3" height="4" fill="#111"/><rect x="2" y="9" width="5" height="1.2" fill="#888"/><rect x="10" y="9" width="5" height="1.2" fill="#888"/></svg><div class="a" style="left:188px;top:303px;width:73px;height:23px;background:#E1E1E1;border:1px solid #ADADAD;box-sizing:border-box;"></div><svg class="a" style="left:193px;top:308px;" width="16" height="14" viewBox="0 0 16 14"><path d="M10.7 4.4 A4.8 4.8 0 1 0 8.6 12.6" fill="none" stroke="#1553C8" stroke-width="2.6"/><polygon points="14.5,2.5 14.5,9.5 7.5,9.5" fill="#1553C8"/></svg><span class="t" style="left:228.75px;top:310px;font-size:11px;color:#000;transform:scaleX(0.8582);">All</span><div class="a" style="left:268px;top:303px;width:73px;height:23px;background:#E1E1E1;border:1px solid #ADADAD;box-sizing:border-box;"></div><svg class="a" style="left:273px;top:308px;" width="16" height="14" viewBox="0 0 16 14"><path d="M10.7 4.4 A4.8 4.8 0 1 0 8.6 12.6" fill="none" stroke="#1553C8" stroke-width="2.6"/><polygon points="14.5,2.5 14.5,9.5 7.5,9.5" fill="#1553C8"/></svg><span class="t" style="left:293.3px;top:310px;font-size:11px;color:#000;transform:scaleX(0.9600);">Selected</span><span class="t" style="left:944.5px;top:312px;font-size:17px;color:#000;font-weight:700;transform:scaleX(1.0117);">Test Results</span><div class="a" style="left:1059px;top:293px;width:7.2999999999999545px;height:1px;background:#DCDCDC;"></div><div class="a" style="left:1149.0px;top:293px;width:15.0px;height:1px;background:#DCDCDC;"></div><div class="a" style="left:1059px;top:293px;width:1px;height:27px;background:#DCDCDC;"></div><div class="a" style="left:1164px;top:293px;width:1px;height:28px;background:#DCDCDC;"></div><div class="a" style="left:1059px;top:320px;width:106px;height:1px;background:#DCDCDC;"></div><span class="t" style="left:1069.3px;top:290px;font-size:11px;color:#000;transform:scaleX(0.9597);">Show Raw Data</span><svg class="a" style="left:1071px;top:304px;" width="13" height="13" viewBox="0 0 13 13"><rect x="0.6" y="0.6" width="11.8" height="11.8" fill="#fff" stroke="#333333" stroke-width="1.2"/></svg><span class="t" style="left:1088.3px;top:306px;font-size:11px;color:#000;transform:scaleX(0.9227);">Xmit</span><svg class="a" style="left:1116px;top:304px;" width="13" height="13" viewBox="0 0 13 13"><rect x="0.6" y="0.6" width="11.8" height="11.8" fill="#fff" stroke="#333333" stroke-width="1.2"/></svg><span class="t" style="left:1133.3px;top:306px;font-size:11px;color:#000;transform:scaleX(0.9576);">Recv</span><div class="a" style="left:1236px;top:279px;width:6.7999999999999545px;height:1px;background:#DCDCDC;"></div><div class="a" style="left:1272.8px;top:279px;width:62.200000000000045px;height:1px;background:#DCDCDC;"></div><div class="a" style="left:1236px;top:279px;width:1px;height:48px;background:#DCDCDC;"></div><div class="a" style="left:1335px;top:279px;width:1px;height:49px;background:#DCDCDC;"></div><div class="a" style="left:1236px;top:327px;width:100px;height:1px;background:#DCDCDC;"></div><span class="t" style="left:1245.8px;top:276px;font-size:11px;color:#000;transform:scaleX(1.0447);">Font</span><svg class="a" style="left:1243.8px;top:291.9px;" width="13" height="13" viewBox="0 0 13 13"><circle cx="6.5" cy="6.5" r="6" fill="#fff" stroke="#333" stroke-width="1"/></svg><span class="t" style="left:1261.5px;top:294px;font-size:11px;color:#000;transform:scaleX(0.9448);">Arial</span><svg class="a" style="left:1243.8px;top:309.9px;" width="13" height="13" viewBox="0 0 13 13"><circle cx="6.5" cy="6.5" r="6" fill="#fff" stroke="#333" stroke-width="1"/><circle cx="6.5" cy="6.5" r="3.5" fill="#333"/></svg><span class="t" style="left:1261.5px;top:312px;font-size:11px;color:#000;transform:scaleX(0.9568);">Courier New</span><div class="a" style="left:2px;top:333px;width:918px;height:594px;background:#FFFFFF;border:1px solid #828790;box-sizing:border-box;"></div><div class="a" style="left:902px;top:334px;width:16px;height:592px;background:#F0F0F0;"></div><div class="a" style="left:902px;top:335px;width:15px;height:16px;background:#DADADA;"></div><svg class="a" style="left:905px;top:340.5px;" width="9" height="6" viewBox="0 0 9 6"><path d="M0.8 5.2 L4.5 1.5 L8.2 5.2" fill="none" stroke="#000" stroke-width="1.8"/></svg><div class="a" style="left:902px;top:352px;width:15px;height:17px;background:#C2C2C2;"></div><svg class="a" style="left:905px;top:914px;" width="9" height="6" viewBox="0 0 9 6"><path d="M0.8 0.8 L4.5 4.5 L8.2 0.8" fill="none" stroke="#606060" stroke-width="1.8"/></svg><svg class="a" style="left:7px;top:336px;" width="14" height="14" viewBox="0 0 14 14"><polygon points="0,6 3.8,9.2 12,0.9 13.2,0.9 13.2,4.6 3.9,13.2 0,9.6" fill="#08B008"/><path d="M13.2 4.4 L3.9 12.8 L0.2 9.3" fill="none" stroke="#067A06" stroke-width="0.9"/></svg><span class="t" style="left:26px;top:338px;font-size:10.4px;color:#000;transform:scaleX(0.9922);-webkit-text-stroke:0.2px #000;">(1) DISC: DISC UN MUTE, Network Broadcast FFFF:FFFFFFFF</span><svg class="a" style="left:7px;top:352px;" width="14" height="14" viewBox="0 0 14 14"><polygon points="0,6 3.8,9.2 12,0.9 13.2,0.9 13.2,4.6 3.9,13.2 0,9.6" fill="#08B008"/><path d="M13.2 4.4 L3.9 12.8 L0.2 9.3" fill="none" stroke="#067A06" stroke-width="0.9"/></svg><span class="t" style="left:26px;top:354px;font-size:10.4px;color:#000;transform:scaleX(0.9737);-webkit-text-stroke:0.2px #000;">(2) DISC: DISC UNIQUE BRANCH [Root]</span><svg class="a" style="left:7px;top:368px;" width="14" height="14" viewBox="0 0 14 14"><polygon points="0,6 3.8,9.2 12,0.9 13.2,0.9 13.2,4.6 3.9,13.2 0,9.6" fill="#08B008"/><path d="M13.2 4.4 L3.9 12.8 L0.2 9.3" fill="none" stroke="#067A06" stroke-width="0.9"/></svg><span class="t" style="left:26px;top:370px;font-size:10.4px;color:#000;transform:scaleX(0.9921);-webkit-text-stroke:0.2px #000;">(3) DISC: DISC MUTE, Network Broadcast FFFF:FFFFFFFF</span><svg class="a" style="left:7px;top:384px;" width="14" height="14" viewBox="0 0 14 14"><polygon points="0,6 3.8,9.2 12,0.9 13.2,0.9 13.2,4.6 3.9,13.2 0,9.6" fill="#08B008"/><path d="M13.2 4.4 L3.9 12.8 L0.2 9.3" fill="none" stroke="#067A06" stroke-width="0.9"/></svg><span class="t" style="left:26px;top:386px;font-size:10.4px;color:#000;transform:scaleX(0.9737);-webkit-text-stroke:0.2px #000;">(4) DISC: DISC UNIQUE BRANCH [Root]</span><svg class="a" style="left:7px;top:400px;" width="14" height="14" viewBox="0 0 14 14"><polygon points="0,6 3.8,9.2 12,0.9 13.2,0.9 13.2,4.6 3.9,13.2 0,9.6" fill="#08B008"/><path d="M13.2 4.4 L3.9 12.8 L0.2 9.3" fill="none" stroke="#067A06" stroke-width="0.9"/></svg><span class="t" style="left:26px;top:402px;font-size:10.4px;color:#000;transform:scaleX(0.9997);-webkit-text-stroke:0.2px #000;">(5) DISC: DISC UN_MUTE, Manufacturer Broadcast 534C:FFFFFFFF</span><svg class="a" style="left:7px;top:416px;" width="14" height="14" viewBox="0 0 14 14"><polygon points="0,6 3.8,9.2 12,0.9 13.2,0.9 13.2,4.6 3.9,13.2 0,9.6" fill="#08B008"/><path d="M13.2 4.4 L3.9 12.8 L0.2 9.3" fill="none" stroke="#067A06" stroke-width="0.9"/></svg><span class="t" style="left:26px;top:418px;font-size:10.4px;color:#000;transform:scaleX(0.9737);-webkit-text-stroke:0.2px #000;">(6) DISC: DISC UNIQUE BRANCH [Root]</span><svg class="a" style="left:7px;top:432px;" width="14" height="14" viewBox="0 0 14 14"><polygon points="0,6 3.8,9.2 12,0.9 13.2,0.9 13.2,4.6 3.9,13.2 0,9.6" fill="#08B008"/><path d="M13.2 4.4 L3.9 12.8 L0.2 9.3" fill="none" stroke="#067A06" stroke-width="0.9"/></svg><span class="t" style="left:26px;top:434px;font-size:10.4px;color:#000;transform:scaleX(1.0030);-webkit-text-stroke:0.2px #000;">(7) DISC: DISC MUTE, Manufacturer Broadcast 534C:FFFFFFFF</span><svg class="a" style="left:7px;top:448px;" width="14" height="14" viewBox="0 0 14 14"><polygon points="0,6 3.8,9.2 12,0.9 13.2,0.9 13.2,4.6 3.9,13.2 0,9.6" fill="#08B008"/><path d="M13.2 4.4 L3.9 12.8 L0.2 9.3" fill="none" stroke="#067A06" stroke-width="0.9"/></svg><span class="t" style="left:26px;top:450px;font-size:10.4px;color:#000;transform:scaleX(0.9737);-webkit-text-stroke:0.2px #000;">(8) DISC: DISC UNIQUE BRANCH [Root]</span><svg class="a" style="left:7px;top:464px;" width="14" height="14" viewBox="0 0 14 14"><polygon points="0,6 3.8,9.2 12,0.9 13.2,0.9 13.2,4.6 3.9,13.2 0,9.6" fill="#08B008"/><path d="M13.2 4.4 L3.9 12.8 L0.2 9.3" fill="none" stroke="#067A06" stroke-width="0.9"/></svg><span class="t" style="left:26px;top:466px;font-size:10.4px;color:#000;transform:scaleX(0.9853);-webkit-text-stroke:0.2px #000;">(9) DISC: DISC UN_MUTE, 534C:39020000</span><svg class="a" style="left:7px;top:480px;" width="14" height="14" viewBox="0 0 14 14"><polygon points="0,6 3.8,9.2 12,0.9 13.2,0.9 13.2,4.6 3.9,13.2 0,9.6" fill="#08B008"/><path d="M13.2 4.4 L3.9 12.8 L0.2 9.3" fill="none" stroke="#067A06" stroke-width="0.9"/></svg><span class="t" style="left:26px;top:482px;font-size:10.4px;color:#000;transform:scaleX(0.9756);-webkit-text-stroke:0.2px #000;">(10) DISC: DISC UNIQUE BRANCH [Root]</span><svg class="a" style="left:7px;top:496px;" width="14" height="14" viewBox="0 0 14 14"><polygon points="0,6 3.8,9.2 12,0.9 13.2,0.9 13.2,4.6 3.9,13.2 0,9.6" fill="#08B008"/><path d="M13.2 4.4 L3.9 12.8 L0.2 9.3" fill="none" stroke="#067A06" stroke-width="0.9"/></svg><span class="t" style="left:26px;top:498px;font-size:10.4px;color:#000;transform:scaleX(0.9936);-webkit-text-stroke:0.2px #000;">(11) DISC: DISC MUTE, 534C:39020000</span><svg class="a" style="left:7px;top:512px;" width="14" height="14" viewBox="0 0 14 14"><polygon points="0,6 3.8,9.2 12,0.9 13.2,0.9 13.2,4.6 3.9,13.2 0,9.6" fill="#08B008"/><path d="M13.2 4.4 L3.9 12.8 L0.2 9.3" fill="none" stroke="#067A06" stroke-width="0.9"/></svg><span class="t" style="left:26px;top:514px;font-size:10.4px;color:#000;transform:scaleX(0.9756);-webkit-text-stroke:0.2px #000;">(12) DISC: DISC UNIQUE BRANCH [Root]</span><svg class="a" style="left:7px;top:528px;" width="14" height="14" viewBox="0 0 14 14"><polygon points="0,6 3.8,9.2 12,0.9 13.2,0.9 13.2,4.6 3.9,13.2 0,9.6" fill="#08B008"/><path d="M13.2 4.4 L3.9 12.8 L0.2 9.3" fill="none" stroke="#067A06" stroke-width="0.9"/></svg><span class="t" style="left:26px;top:530px;font-size:10.4px;color:#000;transform:scaleX(0.9997);-webkit-text-stroke:0.2px #000;">(13) DISC: DISC UN MUTE, SubDevice [1] Network Broadcast FFFF:FFFFFFFF</span><svg class="a" style="left:7px;top:544px;" width="14" height="14" viewBox="0 0 14 14"><polygon points="0,6 3.8,9.2 12,0.9 13.2,0.9 13.2,4.6 3.9,13.2 0,9.6" fill="#08B008"/><path d="M13.2 4.4 L3.9 12.8 L0.2 9.3" fill="none" stroke="#067A06" stroke-width="0.9"/></svg><span class="t" style="left:26px;top:546px;font-size:10.4px;color:#000;transform:scaleX(0.9876);-webkit-text-stroke:0.2px #000;">(14) DISC: DISC UNIQUE BRANCH SubDevice [1]</span><svg class="a" style="left:7px;top:560px;" width="14" height="14" viewBox="0 0 14 14"><polygon points="0,6 3.8,9.2 12,0.9 13.2,0.9 13.2,4.6 3.9,13.2 0,9.6" fill="#08B008"/><path d="M13.2 4.4 L3.9 12.8 L0.2 9.3" fill="none" stroke="#067A06" stroke-width="0.9"/></svg><span class="t" style="left:26px;top:562px;font-size:10.4px;color:#000;transform:scaleX(1.0028);-webkit-text-stroke:0.2px #000;">(15) DISC: DISC MUTE, SubDevice [1] Network Broadcast FFFF:FFFFFFFF</span><svg class="a" style="left:7px;top:576px;" width="14" height="14" viewBox="0 0 14 14"><polygon points="0,6 3.8,9.2 12,0.9 13.2,0.9 13.2,4.6 3.9,13.2 0,9.6" fill="#08B008"/><path d="M13.2 4.4 L3.9 12.8 L0.2 9.3" fill="none" stroke="#067A06" stroke-width="0.9"/></svg><span class="t" style="left:26px;top:578px;font-size:10.4px;color:#000;transform:scaleX(0.9876);-webkit-text-stroke:0.2px #000;">(16) DISC: DISC UNIQUE BRANCH SubDevice [1]</span><svg class="a" style="left:7px;top:592px;" width="14" height="14" viewBox="0 0 14 14"><polygon points="0,6 3.8,9.2 12,0.9 13.2,0.9 13.2,4.6 3.9,13.2 0,9.6" fill="#08B008"/><path d="M13.2 4.4 L3.9 12.8 L0.2 9.3" fill="none" stroke="#067A06" stroke-width="0.9"/></svg><span class="t" style="left:26px;top:594px;font-size:10.4px;color:#000;transform:scaleX(0.9993);-webkit-text-stroke:0.2px #000;">(17) DISC: DISC UN_MUTE, SubDevice [1] 534C:39020000</span><svg class="a" style="left:7px;top:608px;" width="14" height="14" viewBox="0 0 14 14"><polygon points="0,6 3.8,9.2 12,0.9 13.2,0.9 13.2,4.6 3.9,13.2 0,9.6" fill="#08B008"/><path d="M13.2 4.4 L3.9 12.8 L0.2 9.3" fill="none" stroke="#067A06" stroke-width="0.9"/></svg><span class="t" style="left:26px;top:610px;font-size:10.4px;color:#000;transform:scaleX(0.9876);-webkit-text-stroke:0.2px #000;">(18) DISC: DISC UNIQUE BRANCH SubDevice [1]</span><svg class="a" style="left:7px;top:624px;" width="14" height="14" viewBox="0 0 14 14"><polygon points="0,6 3.8,9.2 12,0.9 13.2,0.9 13.2,4.6 3.9,13.2 0,9.6" fill="#08B008"/><path d="M13.2 4.4 L3.9 12.8 L0.2 9.3" fill="none" stroke="#067A06" stroke-width="0.9"/></svg><span class="t" style="left:26px;top:626px;font-size:10.4px;color:#000;transform:scaleX(1.0031);-webkit-text-stroke:0.2px #000;">(19) DISC: DISC MUTE, SubDevice [1] 534C:39020000</span><svg class="a" style="left:7px;top:640px;" width="14" height="14" viewBox="0 0 14 14"><polygon points="0,6 3.8,9.2 12,0.9 13.2,0.9 13.2,4.6 3.9,13.2 0,9.6" fill="#08B008"/><path d="M13.2 4.4 L3.9 12.8 L0.2 9.3" fill="none" stroke="#067A06" stroke-width="0.9"/></svg><span class="t" style="left:26px;top:642px;font-size:10.4px;color:#000;transform:scaleX(0.9876);-webkit-text-stroke:0.2px #000;">(20) DISC: DISC UNIQUE BRANCH SubDevice [1]</span><svg class="a" style="left:7px;top:656px;" width="14" height="14" viewBox="0 0 14 14"><polygon points="0,6 3.8,9.2 12,0.9 13.2,0.9 13.2,4.6 3.9,13.2 0,9.6" fill="#08B008"/><path d="M13.2 4.4 L3.9 12.8 L0.2 9.3" fill="none" stroke="#067A06" stroke-width="0.9"/></svg><span class="t" style="left:26px;top:658px;font-size:10.4px;color:#000;transform:scaleX(0.9930);-webkit-text-stroke:0.2px #000;">(21) DISC: DISC UN MUTE, Network Broadcast FFFF:FFFFFFFF</span><svg class="a" style="left:7px;top:672px;" width="14" height="14" viewBox="0 0 14 14"><polygon points="0,6 3.8,9.2 12,0.9 13.2,0.9 13.2,4.6 3.9,13.2 0,9.6" fill="#08B008"/><path d="M13.2 4.4 L3.9 12.8 L0.2 9.3" fill="none" stroke="#067A06" stroke-width="0.9"/></svg><span class="t" style="left:26px;top:674px;font-size:10.4px;color:#000;transform:scaleX(0.9903);-webkit-text-stroke:0.2px #000;">(22) DISC: DISC UN-MUTE, 534C:39020000</span><svg class="a" style="left:7px;top:688px;" width="14" height="14" viewBox="0 0 14 14"><polygon points="0,6 3.8,9.2 12,0.9 13.2,0.9 13.2,4.6 3.9,13.2 0,9.6" fill="#08B008"/><path d="M13.2 4.4 L3.9 12.8 L0.2 9.3" fill="none" stroke="#067A06" stroke-width="0.9"/></svg><span class="t" style="left:26px;top:690px;font-size:10.4px;color:#000;transform:scaleX(0.9756);-webkit-text-stroke:0.2px #000;">(23) DISC: DISC UNIQUE BRANCH [Root]</span><svg class="a" style="left:7px;top:704px;" width="14" height="14" viewBox="0 0 14 14"><polygon points="0,6 3.8,9.2 12,0.9 13.2,0.9 13.2,4.6 3.9,13.2 0,9.6" fill="#08B008"/><path d="M13.2 4.4 L3.9 12.8 L0.2 9.3" fill="none" stroke="#067A06" stroke-width="0.9"/></svg><span class="t" style="left:26px;top:706px;font-size:10.4px;color:#000;transform:scaleX(0.9991);-webkit-text-stroke:0.2px #000;">(24) GET: DISC MUTE [GET:Root] 534C:39020000</span><svg class="a" style="left:7px;top:720px;" width="14" height="14" viewBox="0 0 14 14"><polygon points="0,6 3.8,9.2 12,0.9 13.2,0.9 13.2,4.6 3.9,13.2 0,9.6" fill="#08B008"/><path d="M13.2 4.4 L3.9 12.8 L0.2 9.3" fill="none" stroke="#067A06" stroke-width="0.9"/></svg><span class="t" style="left:26px;top:722px;font-size:10.4px;color:#000;transform:scaleX(0.9756);-webkit-text-stroke:0.2px #000;">(25) DISC: DISC UNIQUE BRANCH [Root]</span><svg class="a" style="left:7px;top:736px;" width="14" height="14" viewBox="0 0 14 14"><polygon points="0,6 3.8,9.2 12,0.9 13.2,0.9 13.2,4.6 3.9,13.2 0,9.6" fill="#08B008"/><path d="M13.2 4.4 L3.9 12.8 L0.2 9.3" fill="none" stroke="#067A06" stroke-width="0.9"/></svg><span class="t" style="left:26px;top:738px;font-size:10.4px;color:#000;transform:scaleX(0.9885);-webkit-text-stroke:0.2px #000;">(26) DISC: DISC MUTE Malformed PD/PDL 534C:39020000</span><svg class="a" style="left:7px;top:752px;" width="14" height="14" viewBox="0 0 14 14"><polygon points="0,6 3.8,9.2 12,0.9 13.2,0.9 13.2,4.6 3.9,13.2 0,9.6" fill="#08B008"/><path d="M13.2 4.4 L3.9 12.8 L0.2 9.3" fill="none" stroke="#067A06" stroke-width="0.9"/></svg><span class="t" style="left:26px;top:754px;font-size:10.4px;color:#000;transform:scaleX(0.9756);-webkit-text-stroke:0.2px #000;">(27) DISC: DISC UNIQUE BRANCH [Root]</span><svg class="a" style="left:7px;top:768px;" width="14" height="14" viewBox="0 0 14 14"><polygon points="0,6 3.8,9.2 12,0.9 13.2,0.9 13.2,4.6 3.9,13.2 0,9.6" fill="#08B008"/><path d="M13.2 4.4 L3.9 12.8 L0.2 9.3" fill="none" stroke="#067A06" stroke-width="0.9"/></svg><span class="t" style="left:26px;top:770px;font-size:10.4px;color:#000;transform:scaleX(0.9944);-webkit-text-stroke:0.2px #000;">(28) DISC: DISC MUTE [Root] 534C:39020000</span><svg class="a" style="left:7px;top:784px;" width="14" height="14" viewBox="0 0 14 14"><polygon points="0,6 3.8,9.2 12,0.9 13.2,0.9 13.2,4.6 3.9,13.2 0,9.6" fill="#08B008"/><path d="M13.2 4.4 L3.9 12.8 L0.2 9.3" fill="none" stroke="#067A06" stroke-width="0.9"/></svg><span class="t" style="left:26px;top:786px;font-size:10.4px;color:#000;transform:scaleX(0.9756);-webkit-text-stroke:0.2px #000;">(29) DISC: DISC UNIQUE BRANCH [Root]</span><svg class="a" style="left:7px;top:800px;" width="14" height="14" viewBox="0 0 14 14"><polygon points="0,6 3.8,9.2 12,0.9 13.2,0.9 13.2,4.6 3.9,13.2 0,9.6" fill="#08B008"/><path d="M13.2 4.4 L3.9 12.8 L0.2 9.3" fill="none" stroke="#067A06" stroke-width="0.9"/></svg><span class="t" style="left:26px;top:802px;font-size:10.4px;color:#000;transform:scaleX(1.0000);-webkit-text-stroke:0.2px #000;">(30) GET: DISC UN-MUTE [GET:Root] 534C:39020000</span><svg class="a" style="left:7px;top:816px;" width="14" height="14" viewBox="0 0 14 14"><polygon points="0,6 3.8,9.2 12,0.9 13.2,0.9 13.2,4.6 3.9,13.2 0,9.6" fill="#08B008"/><path d="M13.2 4.4 L3.9 12.8 L0.2 9.3" fill="none" stroke="#067A06" stroke-width="0.9"/></svg><span class="t" style="left:26px;top:818px;font-size:10.4px;color:#000;transform:scaleX(0.9761);-webkit-text-stroke:0.2px #000;">(31) DISC: DISC UNIQUE BRANCH [Root]</span><svg class="a" style="left:7px;top:832px;" width="14" height="14" viewBox="0 0 14 14"><polygon points="0,6 3.8,9.2 12,0.9 13.2,0.9 13.2,4.6 3.9,13.2 0,9.6" fill="#08B008"/><path d="M13.2 4.4 L3.9 12.8 L0.2 9.3" fill="none" stroke="#067A06" stroke-width="0.9"/></svg><span class="t" style="left:26px;top:834px;font-size:10.4px;color:#000;transform:scaleX(0.9902);-webkit-text-stroke:0.2px #000;">(32) DISC: DISC UN-MUTE Malformed PD/PDL 534C:39020000</span><svg class="a" style="left:7px;top:848px;" width="14" height="14" viewBox="0 0 14 14"><polygon points="0,6 3.8,9.2 12,0.9 13.2,0.9 13.2,4.6 3.9,13.2 0,9.6" fill="#08B008"/><path d="M13.2 4.4 L3.9 12.8 L0.2 9.3" fill="none" stroke="#067A06" stroke-width="0.9"/></svg><span class="t" style="left:26px;top:850px;font-size:10.4px;color:#000;transform:scaleX(0.9761);-webkit-text-stroke:0.2px #000;">(33) DISC: DISC UNIQUE BRANCH [Root]</span><svg class="a" style="left:7px;top:864px;" width="14" height="14" viewBox="0 0 14 14"><polygon points="0,6 3.8,9.2 12,0.9 13.2,0.9 13.2,4.6 3.9,13.2 0,9.6" fill="#08B008"/><path d="M13.2 4.4 L3.9 12.8 L0.2 9.3" fill="none" stroke="#067A06" stroke-width="0.9"/></svg><span class="t" style="left:26px;top:866px;font-size:10.4px;color:#000;transform:scaleX(0.9910);-webkit-text-stroke:0.2px #000;">(34) DISC: DISC UN-MUTE [Root] 534C:39020000</span><svg class="a" style="left:7px;top:880px;" width="14" height="14" viewBox="0 0 14 14"><polygon points="0,6 3.8,9.2 12,0.9 13.2,0.9 13.2,4.6 3.9,13.2 0,9.6" fill="#08B008"/><path d="M13.2 4.4 L3.9 12.8 L0.2 9.3" fill="none" stroke="#067A06" stroke-width="0.9"/></svg><span class="t" style="left:26px;top:882px;font-size:10.4px;color:#000;transform:scaleX(0.9761);-webkit-text-stroke:0.2px #000;">(35) DISC: DISC UNIQUE BRANCH [Root]</span><svg class="a" style="left:7px;top:896px;" width="14" height="14" viewBox="0 0 14 14"><polygon points="0,6 3.8,9.2 12,0.9 13.2,0.9 13.2,4.6 3.9,13.2 0,9.6" fill="#08B008"/><path d="M13.2 4.4 L3.9 12.8 L0.2 9.3" fill="none" stroke="#067A06" stroke-width="0.9"/></svg><span class="t" style="left:26px;top:898px;font-size:10.4px;color:#000;transform:scaleX(0.9944);-webkit-text-stroke:0.2px #000;">(36) DISC: DISC MUTE [Root] 534C:39020000</span><svg class="a" style="left:7px;top:912px;" width="14" height="14" viewBox="0 0 14 14"><polygon points="0,6 3.8,9.2 12,0.9 13.2,0.9 13.2,4.6 3.9,13.2 0,9.6" fill="#08B008"/><path d="M13.2 4.4 L3.9 12.8 L0.2 9.3" fill="none" stroke="#067A06" stroke-width="0.9"/></svg><span class="t" style="left:26px;top:914px;font-size:10.4px;color:#000;transform:scaleX(0.9761);-webkit-text-stroke:0.2px #000;">(37) DISC: DISC UNIQUE BRANCH [Root]</span><div class="a" style="left:920px;top:333px;width:6px;height:594px;background:#FFFFFF;"></div><div class="a" style="left:922px;top:333px;width:1px;height:593px;background:#A0A0A0;"></div><div class="a" style="left:925px;top:333px;width:1px;height:593px;background:#A0A0A0;"></div><div class="a" style="left:920px;top:926px;width:6px;height:1px;background:#A0A0A0;"></div><div class="a" style="left:926px;top:333px;width:993px;height:570px;background:#FFFFFF;border:1px solid #828790;box-sizing:border-box;"></div><div class="a" style="left:926px;top:903px;width:993px;height:1px;background:#FFFFFF;"></div><div class="a" style="left:926px;top:904px;width:993px;height:1px;background:#FFFFFF;"></div><div class="a" style="left:926px;top:905px;width:992px;height:1px;background:#A0A0A0;"></div><div class="a" style="left:926px;top:906px;width:992px;height:1px;background:#FFFFFF;"></div><div class="a" style="left:926px;top:907px;width:992px;height:1px;background:#FFFFFF;"></div><div class="a" style="left:926px;top:908px;width:992px;height:1px;background:#A0A0A0;"></div><div class="a" style="left:926px;top:909px;width:992px;height:18px;background:#F0F0F0;"></div><div class="a" style="left:927px;top:909px;width:14px;height:9px;background:#E6E6E6;border:1px solid #BDBDBD;box-sizing:border-box;"></div><div class="a" style="left:927px;top:918px;width:14px;height:8px;background:#E6E6E6;border:1px solid #BDBDBD;box-sizing:border-box;"></div><div class="a" style="left:927px;top:917px;width:14px;height:1px;background:#A8A8A8;"></div><svg class="a" style="left:930.5px;top:911px;" width="7" height="14" viewBox="0 0 7 14"><polygon points="3.5,1 6.5,4 0.5,4" fill="#000"/><polygon points="0.5,10 6.5,10 3.5,13" fill="#000"/></svg><span class="t" style="left:1391.4px;top:913px;font-size:11px;color:#000;transform:scaleX(0.9666);">Start Up Log</span><span class="t" style="left:928px;top:338px;font-size:11.667px;color:#000;font-family:'Liberation Mono';-webkit-text-stroke:0.2px #000;">GET: DEVICE LABEL Read back previous SET</span><span class="t" style="left:928px;top:354px;font-size:11.667px;color:#0000FF;font-family:'Liberation Mono';-webkit-text-stroke:0.2px #0000FF;">ADVISORY</span><span class="t" style="left:928px;top:370px;font-size:11.667px;color:#000;font-family:'Liberation Mono';-webkit-text-stroke:0.2px #000;">Response Type of [ACK] received</span><span class="t" style="left:928px;top:386px;font-size:11.667px;color:#000;font-family:'Liberation Mono';-webkit-text-stroke:0.2px #000;">        Device Label [NON Print]</span><span class="t" style="left:928px;top:402px;font-size:11.667px;color:#000;font-family:'Liberation Mono';-webkit-text-stroke:0.2px #000;">        Device Label only matches for the first [9] characters</span><span class="t" style="left:928px;top:418px;font-size:11.667px;color:#00AA00;font-family:'Liberation Mono';-webkit-text-stroke:0.2px #00AA00;">This is a legal response.</span><span class="t" style="left:928px;top:434px;font-size:11.667px;color:#000;font-family:'Liberation Mono';-webkit-text-stroke:0.2px #000;">The Advisory is issued in case the device was supposed to store the entire text value.</span><span class="t" style="left:928px;top:450px;font-size:11.667px;color:#000;font-family:'Liberation Mono';-webkit-text-stroke:0.2px #000;">*** See E1.20 Section 10.1.</span><span class="t" style="left:928px;top:476px;font-size:11.667px;color:#000;font-family:'Liberation Mono';-webkit-text-stroke:0.2px #000;">SET: DEVICE LABEL Data Error with 8 Bit characters</span><span class="t" style="left:928px;top:492px;font-size:11.667px;color:#0000FF;font-family:'Liberation Mono';-webkit-text-stroke:0.2px #0000FF;">ADVISORY</span><span class="t" style="left:928px;top:508px;font-size:11.667px;color:#000;font-family:'Liberation Mono';-webkit-text-stroke:0.2px #000;">Response Type [ACK] NOT Expected</span><span class="t" style="left:928px;top:524px;font-size:11.667px;color:#000;font-family:'Liberation Mono';-webkit-text-stroke:0.2px #000;">        SET:DEVICE LABEL contained one or more illegal 8 bit ASCII characters</span><span class="t" style="left:928px;top:540px;font-size:11.667px;color:#000;font-family:'Liberation Mono';-webkit-text-stroke:0.2px #000;">        Refer to E1.20 section 10.1, ISO/IEC 646</span><span class="t" style="left:928px;top:556px;font-size:11.667px;color:#000;font-family:'Liberation Mono';-webkit-text-stroke:0.2px #000;">--- Valid Response(s):</span><span class="t" style="left:928px;top:572px;font-size:11.667px;color:#000;font-family:'Liberation Mono';-webkit-text-stroke:0.2px #000;">        [NACK] with NR of [Data Out Of Range]</span><div class="a" style="left:1px;top:927px;width:1918px;height:1px;background:#FFFFFF;"></div><div class="a" style="left:0px;top:928px;width:1920px;height:1px;background:#A0A0A0;"></div><div class="a" style="left:1918px;top:269px;width:1px;height:659px;background:#FFFFFF;"></div><div class="a" style="left:1919px;top:268px;width:1px;height:661px;background:#A0A0A0;"></div><span class="t" style="left:931px;top:939px;font-size:16.5px;color:#000;font-weight:700;transform:scaleX(1.0262);">Statistics</span><div class="a" style="left:669px;top:964px;width:499px;height:24px;background:#FFFFFF;"></div><div class="a" style="left:669px;top:988px;width:499px;height:20px;background:#CFEEFD;"></div><div class="a" style="left:667px;top:962px;width:503px;height:1px;background:#FFFFFF;"></div><div class="a" style="left:667px;top:962px;width:1px;height:48px;background:#FFFFFF;"></div><div class="a" style="left:668px;top:963px;width:501px;height:1px;background:#A0A0A0;"></div><div class="a" style="left:668px;top:963px;width:1px;height:46px;background:#A0A0A0;"></div><div class="a" style="left:668px;top:1008px;width:501px;height:1px;background:#FFFFFF;"></div><div class="a" style="left:1168px;top:963px;width:1px;height:46px;background:#FFFFFF;"></div><div class="a" style="left:667px;top:1009px;width:503px;height:1px;background:#A0A0A0;"></div><div class="a" style="left:1169px;top:962px;width:1px;height:48px;background:#A0A0A0;"></div><div class="a" style="left:768px;top:964px;width:1px;height:24px;background:#E3E3E3;"></div><div class="a" style="left:868px;top:964px;width:1px;height:24px;background:#E3E3E3;"></div><div class="a" style="left:968px;top:964px;width:1px;height:24px;background:#E3E3E3;"></div><div class="a" style="left:1068px;top:964px;width:1px;height:24px;background:#E3E3E3;"></div><span class="t" style="left:709.8px;top:971px;font-size:11px;color:#000;transform:scaleX(0.9745);">Total Run</span><span class="t" style="left:815.8px;top:971px;font-size:11px;color:#000;transform:scaleX(0.9073);">Passed</span><span class="t" style="left:918.8px;top:971px;font-size:11px;color:#000;transform:scaleX(0.9210);">Failed</span><span class="t" style="left:1002.8px;top:971px;font-size:11px;color:#000;transform:scaleX(0.9704);">Warnings</span><span class="t" style="left:1103.1px;top:971px;font-size:11px;color:#000;transform:scaleX(0.9498);">Advisories</span><svg class="a" style="left:683px;top:969px;" width="15" height="14" viewBox="0 0 15 14"><polygon points="0.3,6.6 7.6,0 7.6,13.2" fill="#0A4FCC"/><polygon points="4.2,6.6 11.8,0 11.8,13.2" fill="#0A4FCC"/><rect x="11.5" y="3.2" width="2.5" height="7" fill="#0A4FCC"/><path d="M4.2 6.6 L7.6 3.6" stroke="#0638A0" stroke-width="0.8"/></svg><svg class="a" style="left:789px;top:969px;" width="14" height="14" viewBox="0 0 14 14"><polygon points="0,6 3.8,9.2 12,0.9 13.2,0.9 13.2,4.6 3.9,13.2 0,9.6" fill="#08B008"/><path d="M13.2 4.4 L3.9 12.8 L0.2 9.3" fill="none" stroke="#067A06" stroke-width="0.9"/></svg><svg class="a" style="left:891px;top:970px;" width="15" height="12" viewBox="0 0 15 12"><path d="M2.2 1.6 L12.8 10.4 M12.8 1.6 L2.2 10.4" stroke="#E01010" stroke-width="3.3"/></svg><svg class="a" style="left:975px;top:970px;" width="15" height="12" viewBox="0 0 15 12"><path d="M2.2 1.6 L12.8 10.4 M12.8 1.6 L2.2 10.4" stroke="#EEEE10" stroke-width="3.3"/></svg><svg class="a" style="left:1075px;top:970px;" width="15" height="12" viewBox="0 0 15 12"><path d="M2.2 1.6 L12.8 10.4 M12.8 1.6 L2.2 10.4" stroke="#1048D0" stroke-width="3.3"/></svg><span class="t" style="left:706.4px;top:993px;font-size:11px;color:#000;transform:scaleX(0.9353);">5621</span><span class="t" style="left:806.1px;top:993px;font-size:11px;color:#000;transform:scaleX(0.9353);">5619</span><span class="t" style="left:914.14px;top:993px;font-size:11px;color:#000;">0</span><span class="t" style="left:1014.44px;top:993px;font-size:11px;color:#000;">0</span><span class="t" style="left:1114.64px;top:993px;font-size:11px;color:#000;">2</span><div class="a" style="left:0px;top:1021px;width:1920px;height:19px;background:#F0F0F0;"></div><div class="a" style="left:0px;top:1021px;width:1920px;height:1px;background:#D7D7D7;"></div><div class="a" style="left:0px;top:1022px;width:1919px;height:1px;background:#F6F6F6;"></div><div class="a" style="left:1919px;top:1022px;width:1px;height:17px;background:#D5D5D5;"></div><div class="a" style="left:164px;top:1023px;width:1px;height:17px;background:#D0D0D0;"></div><div class="a" style="left:364px;top:1023px;width:1px;height:17px;background:#D0D0D0;"></div><span class="t" style="left:4px;top:1026px;font-size:11px;color:#000;transform:scaleX(0.9722);">Responder UID 534C:39020000</span><span class="t" style="left:169.4px;top:1026px;font-size:11px;color:#000;transform:scaleX(0.9828);">SW Ver ID: 67502336 (0x04060100)</span><span class="t" style="left:369.4px;top:1026px;font-size:11px;color:#000;transform:scaleX(0.9283);">Personality:(1) DMX MERGER 4x HTP</span>
</body></html>
